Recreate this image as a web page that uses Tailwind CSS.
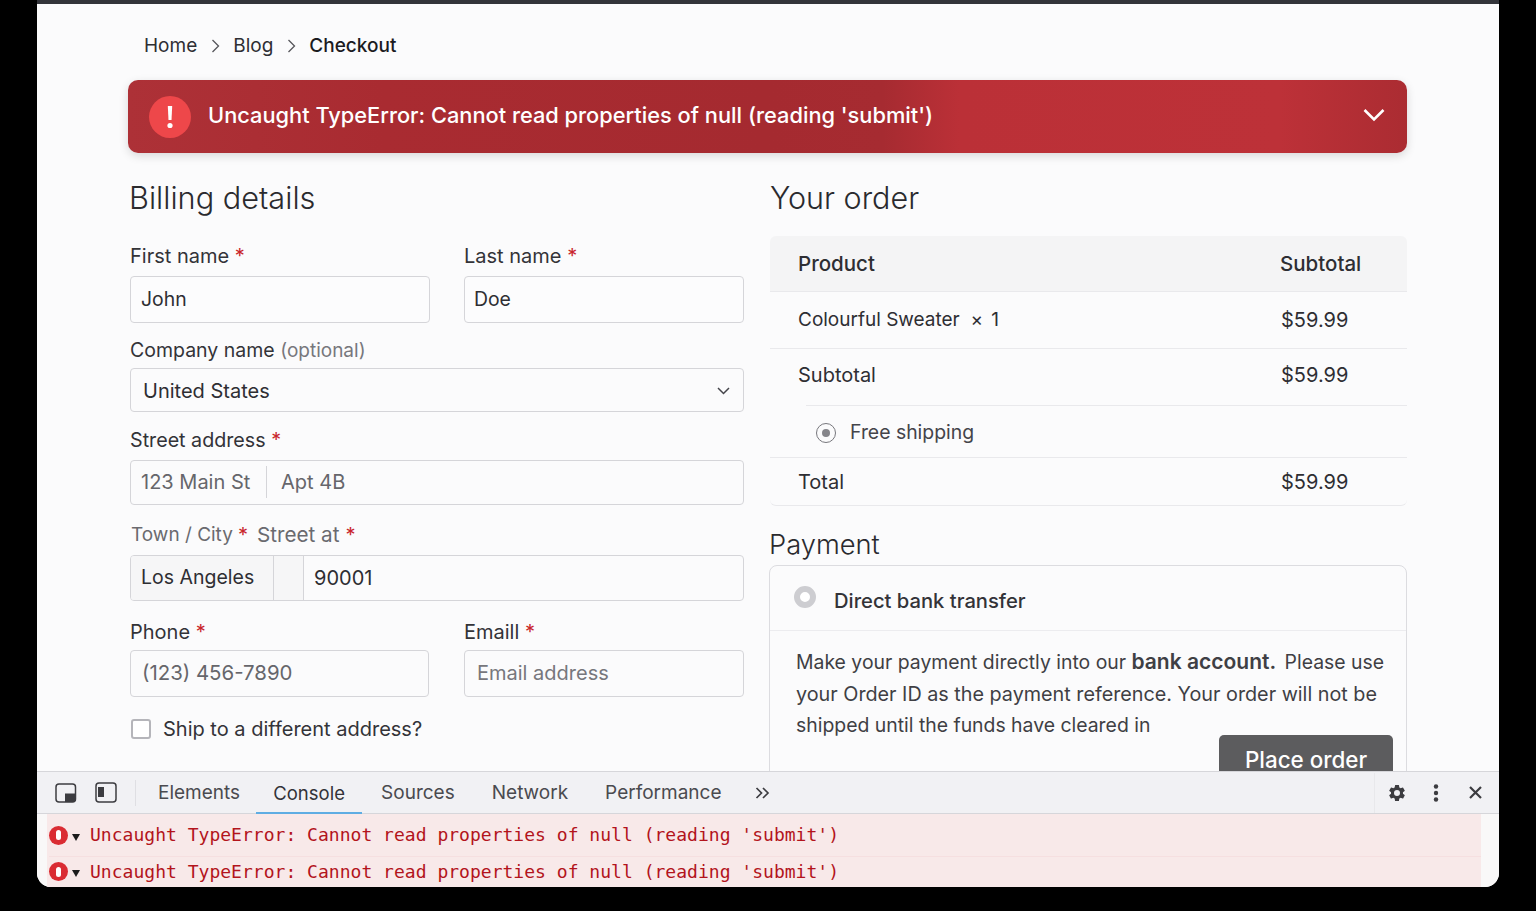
<!DOCTYPE html>
<html lang="en">
<head>
    <meta charset="UTF-8">
    <meta name="viewport" content="width=device-width, initial-scale=1.0">
    <title>Checkout</title>
    <script src="https://cdn.jsdelivr.net/npm/@tailwindcss/browser@4"></script>
</head>
<body class="bg-black h-[911px] overflow-hidden font-['Inter',sans-serif] text-[20px] text-[#333338]">
    <div class="ml-[37px] w-[1462px] h-[887px] flex flex-col overflow-hidden rounded-b-[14px] bg-[#fbfbfc]">
        <div class="h-[4px] shrink-0 bg-[#33343a]"></div>

        <!-- Page -->
        <main class="h-[767px] shrink-0 overflow-hidden pl-[91px] pr-[92px]">
            <!-- Breadcrumb -->
            <nav class="h-[76px] pl-4 flex items-center pt-[8px] text-[19px] text-[#2e2e33]">
                <span>Home</span>
                <svg class="ml-[14px] mr-[13px] w-[9px] h-[14px]" viewBox="0 0 9 14" fill="none" stroke="#55555a" stroke-width="1.3"><path d="M1.5 1l6 6-6 6"/></svg>
                <span>Blog</span>
                <svg class="ml-[14px] mr-[13px] w-[9px] h-[14px]" viewBox="0 0 9 14" fill="none" stroke="#55555a" stroke-width="1.3"><path d="M1.5 1l6 6-6 6"/></svg>
                <span class="text-[#1b1b1f] font-medium">Checkout</span>
            </nav>

            <!-- Error banner -->
            <div class="h-[73px] rounded-[10px] flex items-center pl-[21px] pr-[22px] text-white shadow-[0_3px_10px_rgba(0,0,0,0.14)] bg-[linear-gradient(90deg,#ad3137_0%,#a92b31_20%,#a52a30_50%,#a62b31_59%,#bb3037_65%,#bd3138_90%,#ab2c32_100%)]">
                <div class="w-[42px] h-[42px] rounded-full bg-[#ee474a] flex items-center justify-center shrink-0">
                    <svg class="w-[8px] h-[26px]" viewBox="0 0 8 26" fill="#fff"><path d="M1.8 2h4.4l-.7 14h-3z"/><circle cx="4" cy="21.5" r="2.6"/></svg>
                </div>
                <span class="ml-[17px] mb-[2px] text-[21.8px] font-medium flex-1">Uncaught TypeError: Cannot read properties of null (reading 'submit')</span>
                <svg class="w-[22px] h-[14px] mb-[4px]" viewBox="0 0 22 14" fill="none" stroke="#fff" stroke-width="2.6"><path d="M1.5 2l9.5 9.5L20.5 2"/></svg>
            </div>

            <div class="flex gap-[26px] pl-[1px] mt-[25px]">
                <!-- Billing -->
                <section class="w-[615px] shrink-0 pl-[1px]">
                    <h2 class="-ml-[1px] text-[30.7px] leading-[40px] font-light text-[#2a2a2e]">Billing details</h2>

                    <div class="flex gap-[34px] mt-[23px]">
                        <div class="w-[300px]">
                            <label class="block h-[35px] leading-[30px]">First name <span class="text-[#c9252c]">*</span></label>
                            <div class="h-[47px] border border-[#d5d5d9] rounded-[4px] flex items-center pl-[10px] text-[19.4px] text-[#2e2e33] bg-[#fcfcfd]">John</div>
                        </div>
                        <div class="w-[280px]">
                            <label class="block h-[35px] leading-[30px]">Last name <span class="text-[#c9252c]">*</span></label>
                            <div class="h-[47px] border border-[#d5d5d9] rounded-[4px] flex items-center pl-[9px] text-[19.4px] text-[#2e2e33] bg-[#fcfcfd]">Doe</div>
                        </div>
                    </div>

                    <label class="block mt-[11px] h-[34px] leading-[32px] text-[19.5px]">Company name <span class="text-[19px] text-[#77777c]">(optional)</span></label>
                    <div class="h-[44px] border border-[#d5d5d9] rounded-[4px] flex items-center justify-between pl-[12px] pr-[13px] pt-[1px] text-[#2e2e33]">
                        <span>United States</span>
                        <svg class="w-[13px] h-[8px]" viewBox="0 0 13 8" fill="none" stroke="#44444a" stroke-width="1.5"><path d="M1 1l5.5 5.5L12 1"/></svg>
                    </div>

                    <label class="block mt-[11px] h-[37px] leading-[34px] text-[19.7px]">Street address <span class="text-[#c9252c]">*</span></label>
                    <div class="h-[45px] border border-[#d5d5d9] rounded-[4px] flex items-center pb-[1px] text-[#66666b]">
                        <span class="pl-[10px] w-[135px]">123 Main St</span>
                        <span class="h-[32px] border-l border-[#d5d5d9]"></span>
                        <span class="pl-[14px]">Apt 4B</span>
                    </div>

                    <div class="mt-[12px] h-[38px] leading-[36px] pl-[1px] flex text-[#6a6a6f]">
                        <span class="text-[19px]">Town / City</span><span class="ml-[5px] text-[#c9252c]">*</span>
                        <span class="ml-[9px] text-[20.7px]">Street at</span><span class="ml-[6px] text-[#c9252c]">*</span>
                    </div>
                    <div class="h-[46px] border border-[#d5d5d9] rounded-[4px] flex items-stretch text-[#2e2e33] overflow-hidden">
                        <span class="w-[143px] flex items-center pl-[10px] text-[19.5px] bg-[#f6f6f7] border-r border-[#d5d5d9]">Los Angeles</span>
                        <span class="w-[30px] bg-[#f6f6f7] border-r border-[#d5d5d9]"></span>
                        <span class="flex items-center pl-[10px]">90001</span>
                    </div>

                    <div class="flex gap-[35px] mt-[14px]">
                        <div class="w-[299px]">
                            <label class="block h-[35px] leading-[34px]">Phone <span class="text-[#c9252c]">*</span></label>
                            <div class="h-[47px] border border-[#d5d5d9] rounded-[4px] flex items-center pl-[11px] text-[20.4px] text-[#66666b]">(123) 456-7890</div>
                        </div>
                        <div class="w-[280px]">
                            <label class="block h-[35px] leading-[34px]">Emaill <span class="text-[#c9252c]">*</span></label>
                            <div class="h-[47px] border border-[#d5d5d9] rounded-[4px] flex items-center pl-[12px] pb-[1px] text-[#77777c]">Email address</div>
                        </div>
                    </div>

                    <div class="flex items-center mt-[17px]">
                        <span class="w-[20px] h-[20px] border-2 border-[#b5b5ba] rounded-[3px] bg-white ml-[1px]"></span>
                        <span class="ml-[12px]">Ship to a different address?</span>
                    </div>
                </section>

                <!-- Order -->
                <section class="w-[637px] shrink-0">
                    <h2 class="text-[30.5px] leading-[40px] font-light text-[#2a2a2e]">Your order</h2>

                    <div class="mt-[18px] rounded-[6px] border-b border-[#e9e9ec] text-[#2e2e33]">
                        <div class="h-[56px] bg-[#f4f4f5] rounded-t-[6px] flex items-center pl-[28px] pt-[2px] text-[20.5px] font-medium border-b border-[#e9e9ec]">
                            <span class="w-[482px]">Product</span><span>Subtotal</span>
                        </div>
                        <div class="h-[57px] flex items-center pl-[28px] border-b border-[#e9e9ec]">
                            <span class="w-[483px] text-[19px]">Colourful Sweater &nbsp;× <span class="ml-[3px]">1</span></span><span>$59.99</span>
                        </div>
                        <div class="h-[56px] flex items-center pl-[28px] pb-[5px]">
                            <span class="w-[483px]">Subtotal</span><span>$59.99</span>
                        </div>
                        <div class="h-[52px] flex items-center pl-[46px] ml-[36px] pt-[2px] border-t border-[#e9e9ec]">
                            <span class="w-[20px] h-[20px] rounded-full border border-[#77777c] flex items-center justify-center -ml-[36px] mr-[14px] shrink-0"><span class="w-[8px] h-[8px] rounded-full bg-[#85858a]"></span></span>
                            <span class="text-[19.4px] text-[#44444a]">Free shipping</span>
                        </div>
                        <div class="h-[48px] flex items-center pl-[28px] border-t border-[#e9e9ec]">
                            <span class="w-[483px]">Total</span><span>$59.99</span>
                        </div>
                    </div>

                    <h2 class="-ml-[1px] text-[27.3px] leading-[36px] font-light text-[#2a2a2e] mt-[21px]">Payment</h2>
                    <div class="-ml-[1px] mt-[2px] h-[300px] border border-[#dcdce0] rounded-[8px]">
                        <div class="h-[65px] flex border-b border-[#ececef] pl-[24px]">
                            <span class="w-[22px] h-[22px] rounded-full border-[6px] border-[#cdcdd1] bg-white mt-[20px]"></span>
                            <span class="ml-[18px] mt-[20px] text-[20.2px] font-medium text-[#333338]">Direct bank transfer</span>
                        </div>
                        <p class="pl-[26px] pt-[15px] whitespace-nowrap text-[19.4px] leading-[31.5px] text-[#3f3f44]">Make your payment directly into our <b class="text-[21px] font-semibold">bank account.</b> <span class="ml-[3px]">Please use</span><br><span class="text-[19.77px]">your Order ID as the payment reference. Your order will not be</span><br>shipped until the funds have cleared in</p>
                        <div class="ml-[449px] mt-[-7px] w-[174px] h-[50px] bg-[#5c5c5e] rounded-t-[5px] text-white text-[22.4px] font-medium flex justify-center pt-[8px]">Place order</div>
                    </div>
                </section>
            </div>
        </main>

        <!-- DevTools -->
        <div class="h-[116px] shrink-0 flex flex-col bg-[#f9f8f8]">
            <div class="h-[43px] shrink-0 flex items-center bg-[#f1f1f4] border-y border-[#d6d6da] text-[19px] text-[#4a4a4f]">
                <svg class="ml-[18px] w-[22px] h-[20px]" viewBox="0 0 22 20" fill="none"><rect x="1" y="1" width="19.5" height="18" rx="3" stroke="#3c3c40" stroke-width="1.5"/><path d="M10 10.5h10.5V16a3 3 0 0 1-3 3H10z" fill="#3c3c40"/></svg>
                <svg class="ml-[18px] w-[22px] h-[21px]" viewBox="0 0 22 21" fill="none"><rect x="1" y="1" width="20" height="19" rx="3" stroke="#3c3c40" stroke-width="1.5"/><path d="M3 5h6v10H3z" fill="#3c3c40"/></svg>
                <span class="ml-[18px] h-[26px] border-l border-[#dfdfe3]"></span>
                <span class="ml-[22px] mt-[2px]">Elements</span>
                <span class="ml-[16px] w-[106px] h-[43px] flex items-center justify-center pt-[4px] text-[18.5px] text-[#333338] border-b-[2px] border-[#5fade3]">Console</span>
                <span class="ml-[19px] mt-[2px]">Sources</span>
                <span class="ml-[37px] mt-[2px]">Network</span>
                <span class="ml-[37px] mt-[2px]">Performance</span>
                <svg class="ml-[34px] w-[15px] h-[12px]" viewBox="0 0 15 12" fill="none" stroke="#3c3c40" stroke-width="1.7"><path d="M1.5 1l5 5-5 5M8 1l5 5-5 5"/></svg>
                <div class="ml-auto h-[40px] w-[125px] flex items-center border-l border-[#e8e8eb] pl-[12px]">
                    <svg class="w-[20px] h-[20px]" viewBox="0 0 24 24" fill="#3c3c40"><path d="M19.14 12.94c.04-.3.06-.61.06-.94 0-.32-.02-.64-.07-.94l2.03-1.58a.49.49 0 0 0 .12-.61l-1.92-3.32a.49.49 0 0 0-.59-.22l-2.39.96c-.5-.38-1.03-.7-1.62-.94l-.36-2.54a.48.48 0 0 0-.48-.41h-3.84a.48.48 0 0 0-.47.41l-.36 2.54c-.59.24-1.13.57-1.62.94l-2.39-.96a.48.48 0 0 0-.59.22L2.74 8.87a.48.48 0 0 0 .12.61l2.03 1.58c-.05.3-.09.63-.09.94s.02.64.07.94l-2.03 1.58a.49.49 0 0 0-.12.61l1.92 3.32c.12.22.37.29.59.22l2.39-.96c.5.38 1.03.7 1.62.94l.36 2.54c.05.24.24.41.48.41h3.84c.24 0 .44-.17.47-.41l.36-2.54c.59-.24 1.13-.56 1.62-.94l2.39.96c.22.08.47 0 .59-.22l1.92-3.32a.48.48 0 0 0-.12-.61l-2.01-1.58zM12 15.6A3.6 3.6 0 1 1 12 8.4a3.6 3.6 0 0 1 0 7.2z"/></svg>
                    <svg class="ml-[26px] w-[6px] h-[18px]" viewBox="0 0 6 18" fill="#3c3c40"><circle cx="3" cy="2.5" r="2.2"/><circle cx="3" cy="9" r="2.2"/><circle cx="3" cy="15.5" r="2.2"/></svg>
                    <svg class="ml-[30px] w-[13px] h-[13px]" viewBox="0 0 13 13" fill="none" stroke="#3c3c40" stroke-width="2.2"><path d="M1 1l11 11M12 1L1 12"/></svg>
                </div>
            </div>
            <div class="ml-[10px] w-[1434px] flex-1 pl-[2px] bg-[#f8e9e9] font-['DejaVu_Sans_Mono',monospace] text-[18.05px] text-[#b3141c]">
                <div class="h-[43px] flex items-center border-b border-[#f6dfe0]">
                    <span class="w-[19px] h-[19px] rounded-full bg-[#da2c33] flex items-center justify-center shrink-0"><span class="w-[5px] h-[10px] rounded-[3px] bg-white"></span></span>
                    <span class="ml-[4px] mt-[4px] w-0 h-0 border-x-[4px] border-t-[7px] border-x-transparent border-t-[#1c1c1c]"></span>
                    <span class="ml-[10px]">Uncaught TypeError: Cannot read properties of null (reading 'submit')</span>
                </div>
                <div class="h-[30px] flex items-center pb-[1px]">
                    <span class="w-[19px] h-[19px] rounded-full bg-[#da2c33] flex items-center justify-center shrink-0"><span class="w-[5px] h-[10px] rounded-[3px] bg-white"></span></span>
                    <span class="ml-[4px] mt-[4px] w-0 h-0 border-x-[4px] border-t-[7px] border-x-transparent border-t-[#1c1c1c]"></span>
                    <span class="ml-[10px]">Uncaught TypeError: Cannot read properties of null (reading 'submit')</span>
                </div>
            </div>
        </div>
    </div>
</body>
</html>
